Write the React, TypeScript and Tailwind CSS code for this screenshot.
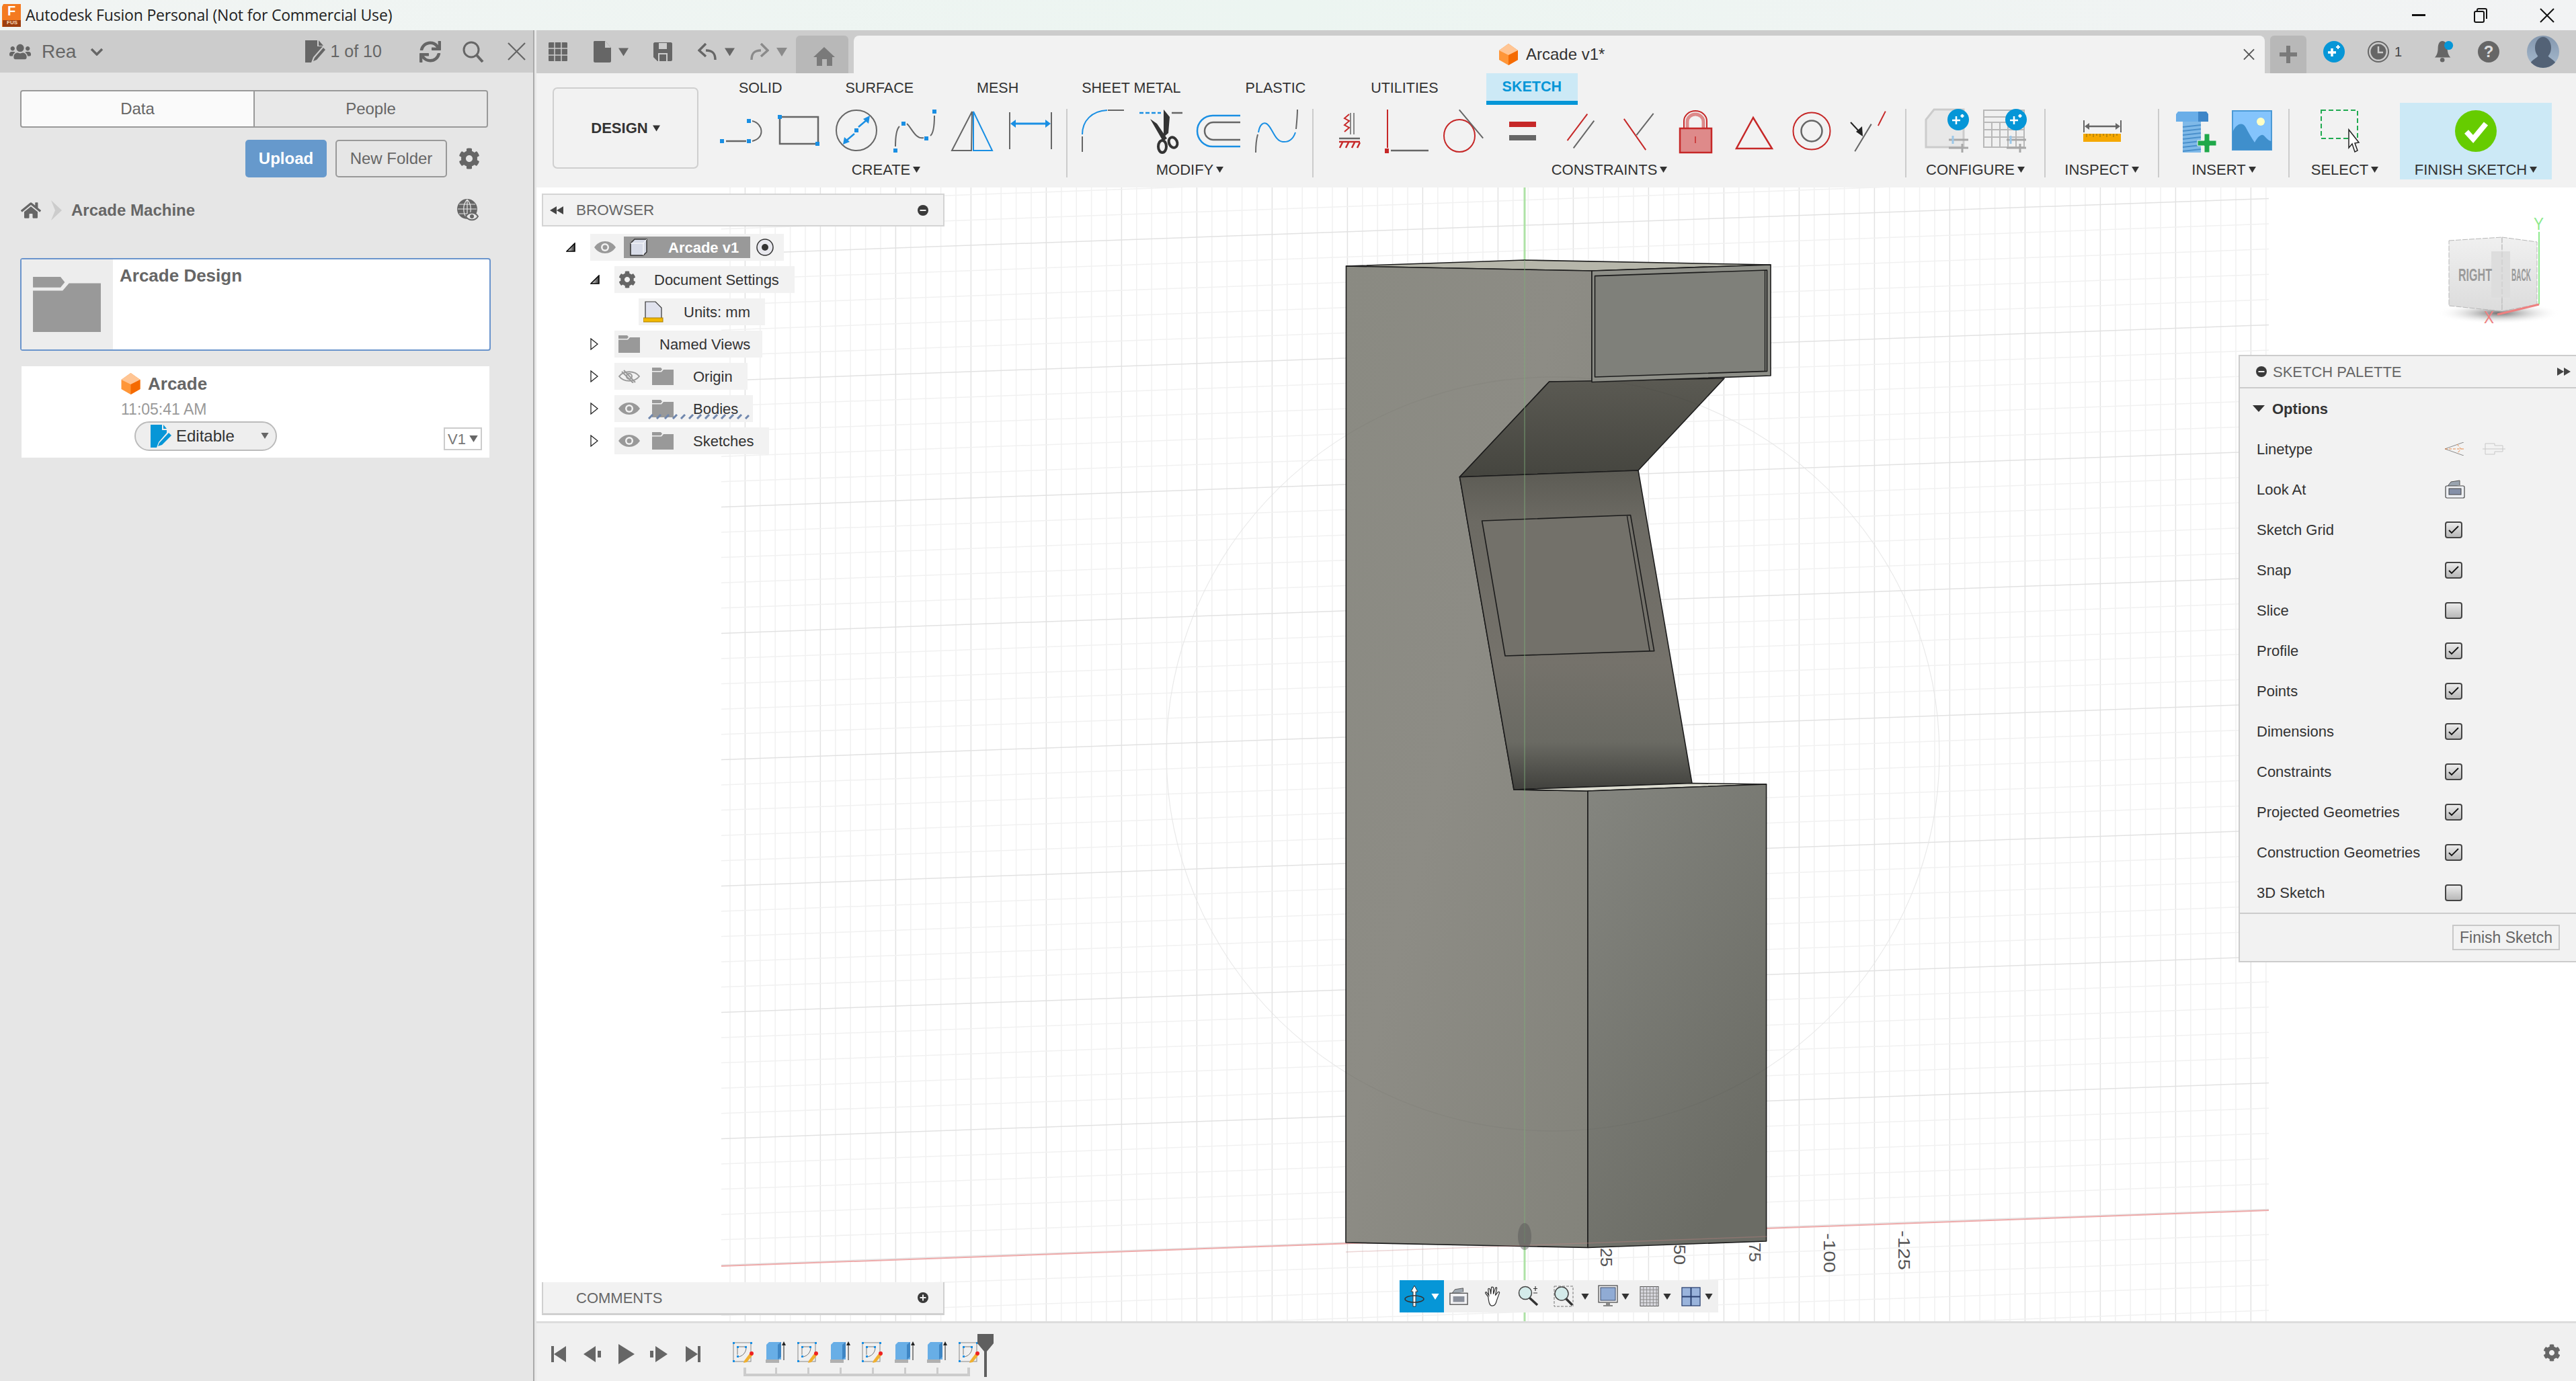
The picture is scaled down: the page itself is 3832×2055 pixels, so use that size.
import type { ReactNode } from "react";
import { FaCog, FaHome, FaSync, FaUsers } from "react-icons/fa";

const B = "#1a8fe3";
const G = "#666666";
const R = "#c62828";

function Cell({ children }: { children: ReactNode }) {
  return (
    <svg viewBox="0 0 86 70" className="w-[86px] h-[70px] shrink-0" fill="none">
      {children}
    </svg>
  );
}

function Sq({ x, y, c = B }: { x: number; y: number; c?: string }) {
  return <rect x={x - 3} y={y - 3} width="6" height="6" fill={c} />;
}

function Caret({ c = "#333333", w = 11, h = 9 }: { c?: string; w?: number; h?: number }) {
  return (
    <svg viewBox="0 0 10 8" style={{ width: w, height: h }} className="shrink-0">
      <path d="M0 0H10L5 8Z" fill={c} />
    </svg>
  );
}

function Cube({ className }: { className: string }) {
  return (
    <svg viewBox="0 0 28 32" className={className}>
      <path d="M14 0L28 10V24L14 32L0 24V10Z" fill="#ff9638" />
      <path d="M14 0L28 10L14 17L0 10Z" fill="#ffc594" />
      <path d="M14 17L28 10V24L14 32Z" fill="#f56a00" />
    </svg>
  );
}

function Folder({ className }: { className: string }) {
  return (
    <svg viewBox="0 0 32 26" className={className}>
      <path d="M0 0H13L15 2.5L13 5H0Z" fill="#999999" />
      <path d="M0 6.5H14L17 3H32V26H0Z" fill="#999999" />
    </svg>
  );
}

function Eye({ off }: { off?: boolean }) {
  if (off) {
    return (
      <svg viewBox="0 0 32 20" className="w-[32px] h-[20px]" fill="none" stroke="#999999" strokeWidth="2">
        <path d="M1 10C8 1 24 1 31 10C24 19 8 19 1 10Z" />
        <circle cx="16" cy="10" r="4" />
        <path d="M8 1L25 19M5 3L22 20" />
      </svg>
    );
  }
  return (
    <svg viewBox="0 0 32 20" className="w-[32px] h-[20px]">
      <path d="M0 10C8 -2 24 -2 32 10C24 22 8 22 0 10Z" fill="#999999" />
      <circle cx="16" cy="10" r="6" fill="#f2f2f2" />
      <circle cx="16" cy="10" r="3.5" fill="#999999" />
    </svg>
  );
}

function Expander({ open }: { open?: boolean }) {
  if (open) {
    return (
      <svg viewBox="0 0 14 14" className="w-[14px] h-[14px]">
        <defs>
          <linearGradient id="exp" x1="0" x2="1" y1="0" y2="0">
            <stop offset="0" stopColor="#ffffff" />
            <stop offset="1" stopColor="#333333" />
          </linearGradient>
        </defs>
        <path d="M1 13L13 1V13Z" fill="url(#exp)" stroke="#000000" strokeWidth="1.5" />
      </svg>
    );
  }
  return (
    <svg viewBox="0 0 12 18" className="w-[12px] h-[18px]">
      <path d="M1 1L11 9L1 17Z" fill="#ffffff" stroke="#222222" strokeWidth="1.3" />
    </svg>
  );
}

function RoundBtn({ minus }: { minus?: boolean }) {
  return (
    <svg viewBox="0 0 16 16" className="w-[16px] h-[16px]">
      <circle cx="8" cy="8" r="8" fill="#3a3a3a" />
      <rect x="3.5" y="7" width="9" height="2" fill="#f2f2f2" />
      {!minus && <rect x="7" y="3.5" width="2" height="9" fill="#f2f2f2" />}
    </svg>
  );
}

function Spark({ className }: { className: string }) {
  return (
    <svg viewBox="0 0 32 32" className={className}>
      <circle cx="16" cy="16" r="16" fill="#0696d7" />
      <path d="M13 11v12M7 17h12" stroke="#ffffff" strokeWidth="3.5" />
      <path d="M22 6v6M19 9h6" stroke="#ffffff" strokeWidth="2" />
    </svg>
  );
}

function Sliders() {
  return (
    <g stroke="#a8a8a8" strokeWidth="3">
      <path d="M46 48H75M46 60H75" />
      <path d="M52 42V54" stroke="#9cc8e8" />
      <path d="M66 54V67" />
    </g>
  );
}

function ToolGroup({ w, label, children, bg }: { w: string; label: string; children?: ReactNode; bg?: string }) {
  return (
    <div className={`${w} ${bg ?? ""} h-full shrink-0 flex flex-col items-center pt-[7px]`}>
      <div className="flex h-[70px]">{children}</div>
      <div className="mt-[7px] flex items-center gap-[4px] h-[30px] text-[22px] text-[#333333] whitespace-nowrap">
        {label}
        <Caret />
      </div>
    </div>
  );
}

function Sep() {
  return <div className="w-[2px] h-[102px] my-[9px] bg-[#cccccc] shrink-0" />;
}

function Create() {
  return (
    <>
      <Cell>
        <path d="M20 50H50" stroke={G} strokeWidth="2.5" />
        <path d="M59 20C76 24 78 46 59 50" stroke={G} strokeWidth="2" />
        <Sq x={14} y={50} /><Sq x={54} y={50} /><Sq x={54} y={20} />
      </Cell>
      <Cell>
        <path d="M17 14H71V54H14V17" stroke={G} strokeWidth="2.5" />
        <Sq x={14} y={14} /><Sq x={70} y={54} />
      </Cell>
      <Cell>
        <circle cx="42" cy="34" r="30" stroke={G} strokeWidth="2" />
        <path d="M45 29L58 18M39 39L26 50" stroke={B} strokeWidth="2.5" />
        <path d="M62 12L60 24L52 17ZM22 55L24 44L32 51Z" fill={B} />
        <rect x="39" y="31" width="6" height="6" fill={B} />
      </Cell>
      <Cell>
        <path d="M14 58C14 42 16 32 20 28M31 24C38 30 44 48 56 45M66 42C71 38 72 25 72 12" stroke={G} strokeWidth="2" />
        <Sq x={14} y={64} /><Sq x={26} y={24} /><Sq x={60} y={46} /><Sq x={72} y={6} />
      </Cell>
      <Cell>
        <path d="M42 6L12 64H41Z" stroke={G} strokeWidth="2" />
        <path d="M44 6V64H72Z" stroke={B} strokeWidth="2" />
      </Cell>
      <Cell>
        <path d="M12 7V62M74 7V62" stroke={G} strokeWidth="2" />
        <path d="M20 24H66" stroke={B} strokeWidth="3" />
        <path d="M13 24L21 18V30ZM73 24L65 18V30Z" fill={B} />
      </Cell>
    </>
  );
}

function Modify() {
  return (
    <>
      <Cell>
        <path d="M12 40C12 20 26 5 49 4" stroke={B} strokeWidth="2" />
        <path d="M50 4H74M12 43V66" stroke={G} strokeWidth="2" />
      </Cell>
      <Cell>
        <path d="M11 8H43" stroke={B} strokeWidth="2.5" strokeDasharray="6 3" />
        <path d="M59 8H75" stroke={G} strokeWidth="2.5" />
        <path d="M47 3L56 14L54 38L47 44ZM27 17L37 24L52 46L46 50Z" fill="#333333" />
        <ellipse cx="45" cy="58" rx="6" ry="9" fill="none" stroke="#333333" strokeWidth="4" />
        <ellipse cx="61" cy="52" rx="6" ry="8" fill="none" stroke="#333333" strokeWidth="4" transform="rotate(-25 61 52)" />
      </Cell>
      <Cell>
        <path d="M75 12H34A23 23 0 0 0 34 58H75" stroke={B} strokeWidth="2.5" />
        <path d="M75 22H35A13 13 0 0 0 35 48H75" stroke={G} strokeWidth="2.5" />
      </Cell>
      <Cell>
        <path d="M16 37C18 24 24 22 28 24C36 28 40 50 52 51C62 52 68 46 71 37" stroke={B} strokeWidth="2" />
        <path d="M72 32C73 22 74 12 74 3M12 67C12 55 13 47 15 40" stroke={G} strokeWidth="2" />
      </Cell>
    </>
  );
}

function Constraints() {
  return (
    <>
      <Cell>
        <path d="M45 8V40M50 8V40" stroke={G} strokeWidth="1.5" />
        <path d="M43 10L36 16L43 20L36 26L43 30L36 36" stroke={R} strokeWidth="2" />
        <path d="M28 46H59" stroke={G} strokeWidth="2.5" />
        <path d="M28 51H59M33 52L29 60M42 52L38 60M51 52L47 60M59 52L55 60" stroke={R} strokeWidth="2.5" />
      </Cell>
      <Cell>
        <path d="M14 3V60" stroke={R} strokeWidth="2" />
        <rect x="10" y="61" width="6" height="7" fill={R} />
        <path d="M19 64H75" stroke={G} strokeWidth="2.5" />
      </Cell>
      <Cell>
        <ellipse cx="35" cy="42" rx="23" ry="24" stroke={R} strokeWidth="2" />
        <path d="M33 5L72 44" stroke={G} strokeWidth="2" transform="rotate(5 52 24)" />
      </Cell>
      <Cell>
        <rect x="23" y="21" width="40" height="8" fill={R} />
        <rect x="23" y="41" width="40" height="8" fill={G} />
      </Cell>
      <Cell>
        <path d="M56 12L21 47" stroke={R} strokeWidth="2" transform="rotate(-8 38 30)" />
        <path d="M66 22L30 58" stroke={G} strokeWidth="2" transform="rotate(-8 48 40)" />
      </Cell>
      <Cell>
        <path d="M18 20L58 60" stroke={R} strokeWidth="2" transform="rotate(10 38 40)" />
        <path d="M67 10L39 40" stroke={G} strokeWidth="2" transform="rotate(-5 53 25)" />
      </Cell>
      <Cell>
        <path d="M25 31V20A17 15 0 0 1 59 20V31" stroke={R} strokeWidth="2" />
        <path d="M30 31V21A12 11 0 0 1 54 21V31" stroke="#dd8a8a" strokeWidth="5" />
        <rect x="19" y="31" width="47" height="36" fill="#de8a8a" stroke={R} strokeWidth="2.5" />
        <path d="M42 43V53" stroke={R} strokeWidth="1.5" />
      </Cell>
      <Cell>
        <path d="M42 15L17 61H70Z" stroke={R} strokeWidth="2.5" />
      </Cell>
      <Cell>
        <circle cx="43" cy="35" r="27.5" stroke={R} strokeWidth="2" />
        <circle cx="43" cy="35" r="15.5" stroke={G} strokeWidth="2.5" />
      </Cell>
      <Cell>
        <path d="M17 62L50 28" stroke={G} strokeWidth="2" transform="rotate(-13 33 45)" />
        <path d="M53 25L70 8" stroke={R} strokeWidth="2" transform="rotate(-18 61 17)" />
        <path d="M15 22L28 36" stroke="#222222" strokeWidth="2" />
        <path d="M33 43L23 36L32 28Z" fill="#222222" />
      </Cell>
    </>
  );
}

function Configure() {
  return (
    <>
      <Cell>
        <path d="M12 59V18L24 3H68V59Z" fill="#e8e8e8" stroke="#cccccc" strokeWidth="3" />
        <Sliders />
        <circle cx="60" cy="18" r="16" fill="#0696d7" />
        <path d="M57 13V25M51 19H63M66 10V15M63.5 12.5H68.5" stroke="#ffffff" strokeWidth="2.5" />
      </Cell>
      <Cell>
        <rect x="12" y="4" width="60" height="55" fill="#f0f0f0" stroke="#b8b8b8" strokeWidth="2" />
        <path d="M12 14H72M24 22V58M36 22V58M48 22V58M60 22V58M12 22H72M12 33H72M12 44H72" stroke="#b8b8b8" strokeWidth="2" />
        <Sliders />
        <circle cx="60" cy="18" r="16" fill="#0696d7" />
        <path d="M57 13V25M51 19H63M66 10V15M63.5 12.5H68.5" stroke="#ffffff" strokeWidth="2.5" />
      </Cell>
    </>
  );
}

function Inspect() {
  return (
    <Cell>
      <path d="M16 19V37M71 19V37" stroke={G} strokeWidth="2" />
      <path d="M22 28H65" stroke={G} strokeWidth="2.5" />
      <path d="M17 28L24 23V33ZM70 28L63 23V33Z" fill={G} />
      <rect x="15" y="39" width="56" height="12" fill="#f5a800" />
      <path d="M20 39V44M25 39V42M30 39V44M35 39V42M40 39V44M45 39V42M50 39V44M55 39V42M60 39V44M65 39V42" stroke="#8a6a10" strokeWidth="1" />
    </Cell>
  );
}

function Insert() {
  return (
    <>
      <Cell>
        <path d="M18 6H60L63 10V21H15V10Z" fill="#6aaee8" />
        <path d="M48 6H60L63 10V21H48Z" fill="#3f86c8" />
        <rect x="25" y="21" width="27" height="46" fill="#7fb9e8" />
        <path d="M25 29L52 26M25 35L52 32M25 41L52 38M25 47L52 44M25 53L52 50M25 59L52 56M25 65L52 62" stroke="#4a90cc" strokeWidth="2" />
        <path d="M57 39H65V49H75V57H65V67H57V57H47V49H57Z" fill="#1fa84a" stroke="#f2f2f2" strokeWidth="1" />
      </Cell>
      <Cell>
        <rect x="13" y="5" width="58" height="58" fill="#84c4fc" stroke="#4b9ad6" strokeWidth="2" />
        <path d="M13 63V37C18 24 28 20 33 30C37 38 42 46 46 52C50 44 56 38 60 42C64 46 67 50 71 50V63Z" fill="#3f8fcc" />
        <circle cx="55" cy="21" r="6" fill="#ffffc4" />
      </Cell>
    </>
  );
}

function SelectIcon() {
  return (
    <div className="mr-[16px]">
      <Cell>
        <rect x="16" y="4" width="54" height="42" stroke="#1faa50" strokeWidth="2" strokeDasharray="7 4" />
        <path d="M57 33V60L62 54L66 66L70 64L66 53L72 52Z" fill="#ffffff" stroke="#222222" strokeWidth="1.5" />
      </Cell>
    </div>
  );
}

function Grid() {
  const vertical = Array.from({ length: 104 }, (_, i) => 1086 + i * 22.4);
  const horizontal = Array.from({ length: 60 }, (_, i) => 1800 + 225 - i * 37.6);
  return (
    <>
      {vertical.map((x, i) => (
        <path key={x} d={`M${x} 279V1966`} stroke={(i + 4) % 5 === 0 ? "#e2e2e2" : "#f1f1f1"} strokeWidth="1.5" />
      ))}
      {horizontal.map((y, i) => (
        <path key={y} d={`M1073 ${y + 83}L3375 ${y}`} stroke={i % 5 === 1 ? "#e2e2e2" : "#f1f1f1"} strokeWidth="1.5" />
      ))}
      <rect x="3376" y="279" width="456" height="1687" fill="#ffffff" />
      <ellipse cx="2310" cy="1122" rx="575" ry="561" fill="none" stroke="#f0f0f0" strokeWidth="1" />
      <path d="M1073 1884L3375 1801" stroke="#eeaaaa" strokeWidth="2" />
      <path d="M2268 279V1966" stroke="#aee2a6" strokeWidth="3" />
    </>
  );
}

function Model() {
  const edge = { stroke: "#1c1c1c", strokeWidth: 1.6, strokeLinejoin: "round" as const };
  return (
    <g>
      <defs>
        <linearGradient id="left" x1="0" x2="1" y1="0" y2="1">
          <stop offset="0" stopColor="#8a8a82" />
          <stop offset="0.45" stopColor="#8d8c85" />
          <stop offset="1" stopColor="#83837b" />
        </linearGradient>
        <linearGradient id="right" x1="0" x2="0.6" y1="0" y2="1">
          <stop offset="0" stopColor="#84857f" />
          <stop offset="1" stopColor="#6b6c65" />
        </linearGradient>
        <linearGradient id="under" x1="0" x2="0" y1="0" y2="1">
          <stop offset="0" stopColor="#5b5a53" />
          <stop offset="1" stopColor="#45453f" />
        </linearGradient>
        <linearGradient id="slope" x1="0" x2="0" y1="0" y2="1">
          <stop offset="0" stopColor="#5c5b54" />
          <stop offset="0.16" stopColor="#6c6a63" />
          <stop offset="0.6" stopColor="#75726b" />
          <stop offset="0.85" stopColor="#6a6a63" />
          <stop offset="1" stopColor="#41413d" />
        </linearGradient>
      </defs>
      <path d="M2002.5 396L2267 387L2634 394L2368 403Z" fill="#b6b6aa" {...edge} />
      <path d="M2002.5 396L2368 403V568.5L2304.6 568L2171.4 709.7L2252 1175L2362 1177V1856.5L2002 1849Z" fill="url(#left)" {...edge} />
      <path d="M2304.6 568L2565 563L2437 700L2171.4 709.7Z" fill="url(#under)" {...edge} />
      <path d="M2171.4 709.7L2437 700L2517 1165.5L2252 1175Z" fill="url(#slope)" {...edge} />
      <path d="M2204.6 775L2425.5 766.5L2460.7 968.6L2239 976Z" fill="#73716a" {...edge} />
      <path d="M2420.4 767.7L2454 968.6" fill="none" stroke="#1c1c1c" strokeWidth="1.4" />
      <path d="M2368 403L2634 394V559L2368 568.5Z" fill="#8e8f88" {...edge} />
      <path d="M2372.5 410.6L2628.6 402V552.4L2372.5 561Z" fill="#7f807a" {...edge} />
      <path d="M2625.5 403V552.5" stroke="#1c1c1c" strokeWidth="1.3" />
      <path d="M2252 1175L2517 1165.5L2627.6 1167L2362 1177Z" fill="#dcdcd0" {...edge} />
      <path d="M2362 1177L2627.6 1167V1847L2362 1856.5Z" fill="url(#right)" {...edge} />
      <ellipse cx="2310" cy="1122" rx="575" ry="561" fill="none" stroke="#000000" strokeOpacity="0.03" strokeWidth="1.5" />
      <path d="M2268 387V1850" stroke="#7fae7a" strokeOpacity="0.55" strokeWidth="1.5" />
      <path d="M2002 1863L2628 1840" stroke="#c98888" strokeOpacity="0.35" strokeWidth="1.5" />
      <ellipse cx="2268" cy="1840" rx="10" ry="20" fill="#555555" fillOpacity="0.45" />
    </g>
  );
}

function Ruler() {
  const labels: [string, number, number, number][] = [
    ["25", 2381, 1857, 28],
    ["50", 2490, 1852, 30],
    ["75", 2602, 1849, 29],
    ["-100", 2713, 1835, 59],
    ["-125", 2824, 1831, 59],
  ];
  return (
    <g>
      {labels.map(([t, x, y, len]) => (
        <text key={t} x={x} y={y} transform={`rotate(90 ${x} ${y})`} fontSize="23" fill="#555555" fontFamily="Liberation Sans" textLength={len} lengthAdjust="spacingAndGlyphs">
          {t}
        </text>
      ))}
    </g>
  );
}

function ViewCube() {
  return (
    <g>
      <defs>
        <linearGradient id="cube" x1="0" x2="0" y1="0" y2="1">
          <stop offset="0" stopColor="#f0f0f0" />
          <stop offset="1" stopColor="#dcdcdc" />
        </linearGradient>
        <radialGradient id="cubeShadow">
          <stop offset="0" stopColor="#707070" />
          <stop offset="1" stopColor="#ffffff" stopOpacity="0" />
        </radialGradient>
      </defs>
      <ellipse cx="3717" cy="466" rx="92" ry="16" fill="url(#cubeShadow)" />
      <path d="M3643 358L3722 353V463L3643 455Z" fill="url(#cube)" stroke="#b8b8b8" strokeWidth="1" strokeDasharray="8 2" />
      <path d="M3722 353L3774 360V453L3722 463Z" fill="url(#cube)" stroke="#b8b8b8" strokeWidth="1" strokeDasharray="8 2" />
      <rect x="3706" y="374" width="28" height="69" fill="#dddddd" />
      <path d="M3722 353V463" stroke="#c8c8c8" strokeWidth="1" strokeDasharray="8 3" />
      <text x="3657" y="418" fontSize="25" fontWeight="700" fill="#9a9a9a" fontFamily="Liberation Sans" textLength="50" lengthAdjust="spacingAndGlyphs">RIGHT</text>
      <text x="3736" y="418" fontSize="25" fontWeight="700" fill="#9a9a9a" fontFamily="Liberation Sans" textLength="29" lengthAdjust="spacingAndGlyphs">BACK</text>
      <path d="M3777 345V453" stroke="#8eea8e" strokeWidth="2" />
      <path d="M3777 453L3715 468" stroke="#ee8080" strokeWidth="3" />
      <text x="3769" y="342" fontSize="25" fill="#8eea8e" fontFamily="Liberation Sans" textLength="15" lengthAdjust="spacingAndGlyphs">Y</text>
      <text x="3695" y="481" fontSize="25" fill="#ee8080" fontFamily="Liberation Sans" textLength="15" lengthAdjust="spacingAndGlyphs">X</text>
    </g>
  );
}

function TreeRow({ level, open, noArrow, w, bg = "bg-[#f2f2f2]", children }: { level: number; open?: boolean; noArrow?: boolean; w: string; bg?: string; children: ReactNode }) {
  const ml = level === 0 ? "ml-[36px]" : level === 1 ? "ml-[72px]" : "ml-[108px]";
  return (
    <div className={`flex items-center h-[40px] ${ml}`}>
      <div className="w-[36px] flex items-center justify-start">{!noArrow && <Expander open={open} />}</div>
      <div className={`${w} ${bg} h-full flex items-center`}>{children}</div>
    </div>
  );
}

function BrowserPanel() {
  return (
    <div className="absolute left-[8px] top-[9px] w-[599px] text-[22px] text-[#333333]">
      <div className="h-[49px] bg-[#f2f2f2] border-2 border-[#d4d4d4] flex items-center pl-[10px] pr-[22px]">
        <svg viewBox="0 0 20 12" className="w-[20px] h-[12px] mr-[21px]">
          <path d="M0 6L10 0V12ZM10 6L20 0V12Z" fill="#444444" />
        </svg>
        <span className="flex-1 text-[#666666] text-[22.5px] ml-[-2px]">BROWSER</span>
        <RoundBtn minus />
      </div>
      <div className="mt-[11px] flex flex-col gap-[8px]">
        <TreeRow level={0} open w="w-[288px]">
          <div className="w-[6px]" />
          <Eye />
          <div className="ml-[12px] w-[188px] h-[32px] bg-[#999999] flex items-center text-white font-bold">
            <svg viewBox="0 0 26 26" className="w-[26px] h-[26px] ml-[9px] mr-[31px]">
              <path d="M1 7L7 1H25V20L20 25H1Z" fill="#d8dce8" stroke="#333333" strokeWidth="1.5" />
              <path d="M1 7H20V25M20 7L25 1" fill="none" stroke="#ffffff" strokeWidth="1" />
            </svg>
            Arcade v1
          </div>
          <svg viewBox="0 0 26 26" className="w-[26px] h-[26px] ml-[9px]">
            <circle cx="13" cy="13" r="12" fill="#e8e8ee" stroke="#333333" strokeWidth="1.5" />
            <circle cx="13" cy="13" r="5" fill="#333333" />
          </svg>
        </TreeRow>
        <TreeRow level={1} open w="w-[268px]">
          <FaCog className="ml-[6px] w-[26px] h-[26px] text-[#666666]" />
          <span className="ml-[27px]">Document Settings</span>
        </TreeRow>
        <TreeRow level={2} noArrow w="w-[188px]">
          <svg viewBox="0 0 30 32" className="w-[30px] h-[32px] ml-[7px]">
            <path d="M3 1H18L27 10V26H3Z" fill="#e0e2ee" stroke="#333333" strokeWidth="1.2" />
            <rect x="0" y="25" width="29" height="6" fill="#f2b800" stroke="#a87c00" strokeWidth="1" />
          </svg>
          <span className="ml-[30px]">Units: mm</span>
        </TreeRow>
        <TreeRow level={1} w="w-[220px]">
          <Folder className="ml-[6px] w-[32px] h-[26px]" />
          <span className="ml-[29px]">Named Views</span>
        </TreeRow>
        <TreeRow level={1} w="w-[198px]">
          <div className="ml-[6px]"><Eye off /></div>
          <Folder className="ml-[18px] w-[32px] h-[26px]" />
          <span className="ml-[29px]">Origin</span>
        </TreeRow>
        <TreeRow level={1} w="w-[206px] relative">
          <div className="ml-[6px]"><Eye /></div>
          <Folder className="ml-[18px] w-[32px] h-[26px]" />
          <span className="ml-[29px]">Bodies</span>
          <svg viewBox="0 0 152 8" className="absolute left-[49px] top-[28px] w-[152px] h-[8px]">
            <path d="M2 7L8 1M14 7L20 1M26 7L32 1M38 7L44 1M50 7L56 1M62 7L68 1M74 7L80 1M86 7L92 1M98 7L104 1M110 7L116 1M122 7L128 1M134 7L140 1M146 7L151 2" stroke="#6f86ad" strokeWidth="3" />
          </svg>
        </TreeRow>
        <TreeRow level={1} w="w-[230px]">
          <div className="ml-[6px]"><Eye /></div>
          <Folder className="ml-[18px] w-[32px] h-[26px]" />
          <span className="ml-[29px]">Sketches</span>
        </TreeRow>
      </div>
    </div>
  );
}

function Check({ on }: { on: boolean }) {
  return (
    <div className="w-[26px] h-[25px] rounded-[4px] border-2 border-[#444444] bg-linear-to-b from-[#ececec] to-[#b8b8b8] flex items-center justify-center">
      {on && (
        <svg viewBox="0 0 20 16" className="w-[20px] h-[16px]" fill="none">
          <path d="M3 9L7 13L17 3" stroke="#111111" strokeWidth="1.8" />
        </svg>
      )}
    </div>
  );
}

const paletteRows: [string, boolean][] = [
  ["Sketch Grid", true],
  ["Snap", true],
  ["Slice", false],
  ["Profile", true],
  ["Points", true],
  ["Dimensions", true],
  ["Constraints", true],
  ["Projected Geometries", true],
  ["Construction Geometries", true],
  ["3D Sketch", false],
];

function PaletteRow({ label, children }: { label: string; children: ReactNode }) {
  return (
    <div className="h-[60px] flex items-center pl-[25px] text-[#333333] text-[22px]">
      <span className="w-[280px]">{label}</span>
      {children}
    </div>
  );
}

function SketchPalette() {
  return (
    <div className="absolute right-0 top-[249px] w-[502px] h-[904px] bg-[#f2f2f2] border-2 border-r-0 border-[#cccccc] flex flex-col">
      <div className="h-[48px] shrink-0 border-b-2 border-[#cccccc] flex items-center pl-[24px] pr-[8px] text-[22px] text-[#666666]">
        <RoundBtn minus />
        <span className="ml-[9px] flex-1">SKETCH PALETTE</span>
        <svg viewBox="0 0 20 12" className="w-[20px] h-[12px]">
          <path d="M0 0L10 6L0 12ZM10 0L20 6L10 12Z" fill="#444444" />
        </svg>
      </div>
      <div className="h-[60px] shrink-0 flex items-center pl-[19px] text-[22px] font-bold text-[#333333]">
        <svg viewBox="0 0 18 10" className="w-[18px] h-[10px] mr-[11px]">
          <path d="M0 0H18L9 10Z" fill="#333333" />
        </svg>
        Options
      </div>
      <PaletteRow label="Linetype">
        <svg viewBox="0 0 92 20" className="w-[92px] h-[20px] shrink-0" fill="none">
          <path d="M28 0L0 10L28 20" stroke="#8a8a8a" strokeWidth="1" />
          <path d="M0 10H30M18 3L24 10L18 17" stroke="#e88a4a" strokeWidth="1" strokeDasharray="4 2" />
          <path d="M60 2H74V5H86V14H74V18H60ZM56 10H90" stroke="#c8c8c8" strokeWidth="1" />
        </svg>
      </PaletteRow>
      <PaletteRow label="Look At">
        <svg viewBox="0 0 30 28" className="w-[30px] h-[28px] shrink-0">
          <path d="M2 12L9 3L22 1V8" fill="#9aa4b0" stroke="#555555" strokeWidth="1" />
          <rect x="1" y="9" width="28" height="18" rx="2" fill="#eef0f4" stroke="#444444" strokeWidth="1.2" />
          <rect x="6" y="13" width="18" height="9" fill="#8590a8" stroke="#444444" strokeWidth="1" />
        </svg>
      </PaletteRow>
      {paletteRows.map(([label, on]) => (
        <PaletteRow key={label} label={label}>
          <Check on={on} />
        </PaletteRow>
      ))}
      <div className="flex-1 border-t-2 border-[#cccccc] flex items-start justify-end pt-[16px] pr-[24px]">
        <div className="w-[160px] h-[38px] border-2 border-[#c8c8c8] text-[#666666] text-[23px] flex items-center justify-center">Finish Sketch</div>
      </div>
    </div>
  );
}

function NavBar() {
  return (
    <div className="absolute left-[1284px] top-[1626px] h-[48px] w-[474px] bg-[#f0f0f0] flex items-center">
      <div className="w-[66px] h-full bg-[#0696d7] flex items-center justify-center gap-[10px]">
        <svg viewBox="0 0 30 34" className="w-[30px] h-[34px]" fill="none">
          <path d="M15 1L20 10H17V32H13V10H10Z" fill="#ffffff" stroke="#333333" strokeWidth="1" />
          <ellipse cx="15" cy="21" rx="14" ry="5" stroke="#333333" strokeWidth="1.5" />
        </svg>
        <Caret c="#ffffff" w={12} h={9} />
      </div>
      <svg viewBox="0 0 30 30" className="w-[28px] h-[28px] ml-[8px]">
        <path d="M2 13L9 4L22 2V8" fill="#a0a8b0" stroke="#555555" strokeWidth="1" />
        <rect x="1" y="10" width="28" height="18" fill="#f2f2f4" stroke="#555555" strokeWidth="1.5" />
        <rect x="6" y="15" width="18" height="9" fill="#8a8f9a" />
      </svg>
      <svg viewBox="0 0 32 32" className="w-[31px] h-[31px] ml-[23px]">
        <path d="M7 16L3 11C2 9 4 8 5 10L8 14L7 5C7 3 9 3 10 5L11 12L12 2C12 1 14 1 15 2L15 12L18 3C19 1 21 2 20 4L18 14L22 9C24 8 25 9 24 11L20 22C19 27 17 30 13 30C9 30 8 25 7 16Z" fill="#ffffff" stroke="#333333" strokeWidth="1.3" />
      </svg>
      <svg viewBox="0 0 32 32" className="w-[32px] h-[32px] ml-[20px]">
        <path d="M17 18L29 29" stroke="#333333" strokeWidth="3.5" />
        <circle cx="11" cy="11" r="9.5" fill="#d4ebea" stroke="#444444" strokeWidth="1.5" />
        <path d="M26 1V8M23 4.5H29M23 11H29" stroke="#333333" strokeWidth="1.2" />
      </svg>
      <svg viewBox="0 0 30 32" className="w-[30px] h-[32px] ml-[21px]">
        <rect x="1" y="1" width="28" height="30" fill="none" stroke="#777777" strokeWidth="1" strokeDasharray="4 2" />
        <path d="M17 18L28 29" stroke="#333333" strokeWidth="3.5" />
        <circle cx="12" cy="12" r="10" fill="#d4ebea" stroke="#444444" strokeWidth="1.5" />
      </svg>
      <div className="ml-[11px]"><Caret c="#333333" w={12} h={9} /></div>
      <svg viewBox="0 0 30 34" className="w-[30px] h-[34px] ml-[13px]">
        <rect x="1" y="1" width="28" height="25" fill="#f0f0f0" stroke="#444444" strokeWidth="1.2" />
        <rect x="4" y="4" width="22" height="19" fill="#90abd4" stroke="#3a4a6a" strokeWidth="1" />
        <path d="M12 27H18V30H22V32H8V30H12Z" fill="#888888" />
      </svg>
      <div className="ml-[5px]"><Caret c="#333333" w={12} h={9} /></div>
      <svg viewBox="0 0 30 32" className="w-[29px] h-[32px] ml-[15px]">
        <rect x="1" y="1" width="28" height="30" fill="#d8d8de" stroke="#555555" strokeWidth="1" />
        <path d="M1 6H29M1 11H29M1 16H29M1 21H29M1 26H29M6 1V31M11 1V31M16 1V31M21 1V31M26 1V31" stroke="#8a8a8a" strokeWidth="1" />
      </svg>
      <div className="ml-[6px]"><Caret c="#333333" w={12} h={9} /></div>
      <svg viewBox="0 0 30 30" className="w-[29px] h-[29px] ml-[15px]">
        <rect x="1" y="1" width="28" height="28" fill="#9ab4dc" stroke="#2a4070" strokeWidth="1.3" />
        <path d="M15 1V29M1 15H29" stroke="#2a4070" strokeWidth="2" />
      </svg>
      <div className="ml-[6px]"><Caret c="#333333" w={12} h={9} /></div>
    </div>
  );
}

function SketchStep() {
  return (
    <svg viewBox="0 0 31 31" className="w-[31px] h-[31px] shrink-0" fill="none">
      <rect x="1" y="1" width="26" height="28" stroke="#888888" strokeWidth="1" />
      <path d="M7 7H20M7 7V19M7 22C14 22 20 16 20 8" stroke="#777777" strokeWidth="1" />
      <g fill={B}>
        <rect width="3" height="3" /><rect x="26" width="3" height="3" /><rect y="27" width="3" height="3" />
        <rect x="6" y="6" width="3" height="3" /><rect x="18" y="6" width="3" height="3" /><rect x="6" y="20" width="3" height="3" />
      </g>
      <path d="M17 28L26 16L30 19L21 30L16 31Z" fill="#f0b030" />
      <circle cx="28" cy="17" r="3" fill="#ee2222" />
    </svg>
  );
}

function ExtrudeStep() {
  return (
    <svg viewBox="0 0 31 32" className="w-[31px] h-[32px] shrink-0">
      <path d="M2 5L6 1H24V27H2Z" fill="#68aee6" />
      <path d="M19 5L24 1V23L19 27Z" fill="#3f86c4" />
      <rect x="1" y="27" width="20" height="5" fill="#b0b0b0" />
      <path d="M28 28V4" stroke="#222222" strokeWidth="1" />
      <path d="M28 0L31 6H25Z" fill="#222222" />
    </svg>
  );
}

function Timeline() {
  const steps = ["s", "e", "s", "e", "s", "e", "e", "s"];
  return (
    <div className="relative h-[89px] shrink-0 bg-[#f0f0f0] border-t-[3px] border-[#dddddd] flex items-center">
      <div className="flex items-center ml-[22px] mt-[6px]">
        <svg viewBox="0 0 22 24" className="w-[22px] h-[24px]"><path d="M0 0H4V24H0ZM22 0V24L4 12Z" fill={G} /></svg>
        <svg viewBox="0 0 26 24" className="w-[26px] h-[24px] ml-[26px]"><path d="M18 0V24L0 12ZM21 7H26V17H21Z" fill={G} /></svg>
        <svg viewBox="0 0 24 30" className="w-[24px] h-[30px] ml-[26px]"><path d="M0 0L24 15L0 30Z" fill={G} /></svg>
        <svg viewBox="0 0 26 24" className="w-[26px] h-[24px] ml-[23px]"><path d="M8 0L26 12L8 24ZM0 7H5V17H0Z" fill={G} /></svg>
        <svg viewBox="0 0 22 24" className="w-[22px] h-[24px] ml-[27px]"><path d="M0 0L18 12L0 24ZM18 0H22V24H18Z" fill={G} /></svg>
      </div>
      <div className="flex items-center ml-[48px] gap-[17px]">
        {steps.map((s, i) => (s === "s" ? <SketchStep key={i} /> : <ExtrudeStep key={i} />))}
      </div>
      <div className="absolute left-[308px] top-[66px] w-[337px] h-[13px] border-x-[4px] border-b-[4px] border-[#cccccc] flex justify-between px-[43px]">
        {[0, 1, 2, 3, 4, 5].map((i) => (
          <div key={i} className="w-[3px] h-full bg-[#cccccc]" />
        ))}
      </div>
      <svg viewBox="0 0 24 64" className="absolute left-[656px] top-[16px] w-[24px] h-[64px]">
        <path d="M0 0H24V14L14 26V64H10V26L0 14Z" fill="#5f5f5f" />
      </svg>
      <FaCog className="absolute right-[23px] top-[31px] w-[26px] h-[26px] text-[#666666]" />
    </div>
  );
}

export default function App() {
  return (
    <div className="w-[3832px] h-[2055px] overflow-hidden flex flex-col bg-white text-[#333333] [font-family:'Liberation_Sans',Arial,sans-serif]">
      {/* Title bar */}
      <header className="h-[45px] shrink-0 flex items-center bg-linear-to-r from-[#f1f4f3] via-[#ecf5f1] to-[#f2f3f4] relative">
        <svg viewBox="0 0 30 34" className="w-[30px] h-[34px] ml-[1px]">
          <path d="M4 0H30V34H2V4Z" fill="#f47a20" />
          <rect x="3" y="24" width="27" height="10" fill="#9c3e10" />
        </svg>
        <span className="absolute left-[11px] top-[4px] text-white text-[20px] leading-[24px] font-bold">F</span>
        <span className="absolute left-[10px] top-[29px] text-[#f8d8b8] text-[8px] leading-[9px] font-bold">FUS</span>
        <span className="ml-[7px] text-[23px] text-[#222222] [font-family:'Open_Sans',sans-serif] tracking-[-0.18px]">
          Autodesk Fusion Personal (Not for Commercial Use)
        </span>
        <div className="ml-auto flex items-center">
          <div className="w-[20px] h-[3px] bg-[#111111] mr-[72px]" />
          <svg viewBox="0 0 20 22" className="w-[20px] h-[22px] mr-[78px]" fill="none" stroke="#111111" strokeWidth="2">
            <rect x="1" y="5" width="14" height="16" rx="2" />
            <path d="M5 4V3C5 2 6 1 7 1H17C18 1 19 2 19 3V16" />
          </svg>
          <svg viewBox="0 0 22 22" className="w-[22px] h-[22px] mr-[32px]" fill="none" stroke="#111111" strokeWidth="2">
            <path d="M1 1L21 21M21 1L1 21" />
          </svg>
        </div>
      </header>

      <div className="flex-1 flex min-h-0">
        {/* Data panel */}
        <aside className="w-[795px] shrink-0 border-r-2 border-[#aaaaaa] bg-[#e6e6e6] flex flex-col">
          <div className="h-[63px] shrink-0 bg-[#cccccc] flex items-center pl-[14px] text-[#666666]">
            <FaUsers className="w-[32px] h-[32px]" />
            <span className="ml-[16px] text-[28px]">Rea</span>
            <svg viewBox="0 0 20 12" className="w-[20px] h-[12px] ml-[21px]" fill="none" stroke="#666666" strokeWidth="3.5">
              <path d="M2 2L10 10L18 2" />
            </svg>
            <svg viewBox="0 0 30 34" className="w-[30px] h-[34px] ml-[300px]">
              <path d="M0 0H18V9H26L12 25L9 33H0Z" fill="#666666" />
              <path d="M20 0L27 8H20Z" fill="#666666" />
              <path d="M14 26L27 11L30 14L17 29L12 31Z" fill="#666666" />
            </svg>
            <span className="ml-[7px] text-[25px]">1 of 10</span>
            <FaSync className="w-[32px] h-[32px] ml-[56px]" />
            <svg viewBox="0 0 32 32" className="w-[32px] h-[32px] ml-[32px]" fill="none" stroke="#666666">
              <circle cx="13" cy="13" r="11" strokeWidth="3" />
              <path d="M21 21L30 31" strokeWidth="4" />
            </svg>
            <svg viewBox="0 0 27 27" className="w-[27px] h-[27px] ml-[35px]" fill="none" stroke="#666666" strokeWidth="2.2">
              <path d="M1 1L26 26M26 1L1 26" />
            </svg>
          </div>

          <div className="mt-[26px] ml-[30px] w-[696px] h-[56px] flex border-2 border-[#999999] rounded-[4px] text-[24px] text-[#666666]">
            <div className="flex-1 bg-[#fafafa] rounded-l-[3px] border-r-2 border-[#999999] flex items-center justify-center">Data</div>
            <div className="flex-1 bg-[#e8e8e8] rounded-r-[3px] flex items-center justify-center">People</div>
          </div>

          <div className="mt-[18px] flex items-center pl-[365px]">
            <div className="w-[121px] h-[56px] bg-[#6699cc] rounded-[5px] text-white font-bold text-[24px] flex items-center justify-center">Upload</div>
            <div className="ml-[13px] w-[166px] h-[56px] border-2 border-[#999999] rounded-[5px] text-[#666666] text-[24px] flex items-center justify-center">New Folder</div>
            <FaCog className="ml-[17px] w-[32px] h-[32px] text-[#666666]" />
          </div>

          <div className="mt-[33px] h-[32px] flex items-center pl-[31px] text-[#666666]">
            <FaHome className="w-[30px] h-[28px]" />
            <svg viewBox="0 0 18 32" className="w-[18px] h-[32px] ml-[14px]">
              <path d="M1 1L17 16L1 31L7 16Z" fill="#cccccc" />
            </svg>
            <span className="ml-[13px] text-[24px] font-bold flex-1">Arcade Machine</span>
            <svg viewBox="0 0 32 34" className="w-[32px] h-[34px] mr-[81px]" fill="none" stroke="#666666" strokeWidth="2">
              <circle cx="15" cy="15" r="14" fill="#666666" />
              <path d="M1 15H29M3 8H27M3 22H27M15 1V29M15 1C8 8 8 22 15 29M15 1C22 8 22 22 15 29" stroke="#e6e6e6" strokeWidth="1.2" />
              <path d="M13 26C17 19 27 19 31 26C27 33 17 33 13 26Z" fill="#e6e6e6" stroke="#666666" strokeWidth="2" />
              <circle cx="22" cy="26" r="3" fill="#666666" stroke="none" />
            </svg>
          </div>

          <div className="mt-[55px] ml-[30px] w-[700px] h-[138px] flex bg-white border-2 border-[#6a94cc] rounded-[4px]">
            <div className="w-[136px] bg-[#ededed] flex items-center justify-center">
              <Folder className="w-[111px] h-[82px] ml-[-2px]" />
            </div>
            <div className="ml-[10px] mt-[5px] text-[26px] font-bold text-[#666666]">Arcade Design</div>
          </div>

          <div className="relative mt-[23px] ml-[32px] w-[696px] h-[136px] bg-white flex">
            <div className="w-[136px]" />
            <div className="ml-[12px] flex flex-col">
              <div className="flex items-center h-[32px] mt-[10px]">
                <Cube className="w-[29px] h-[32px]" />
                <span className="ml-[11px] text-[26px] font-bold text-[#666666]">Arcade</span>
              </div>
              <div className="mt-[5px] text-[23px] text-[#999999]">11:05:41 AM</div>
              <div className="mt-0 ml-[20px] w-[212px] h-[44px] rounded-full border-2 border-[#bbbbbb] bg-[#eeeeee] flex items-center pl-[22px] text-[24px] text-[#333333]">
                <svg viewBox="0 0 32 34" className="w-[32px] h-[34px]">
                  <path d="M0 0H17V8H24V12L12 26L9 34H0Z" fill="#0696d7" />
                  <path d="M19 0L24 6H19Z" fill="#0696d7" />
                  <path d="M13 27L27 12L31 16L17 30L11 32Z" fill="#0696d7" />
                </svg>
                <span className="ml-[6px] flex-1">Editable</span>
                <Caret c="#666666" w={14} h={9} />
                <div className="w-[9px]" />
              </div>
            </div>
            <div className="absolute right-[11px] bottom-[11px] w-[57px] h-[34px] border-2 border-[#cccccc] flex items-center justify-center gap-[5px] text-[22px] text-[#777777]">
              V1
              <Caret c="#666666" w={13} h={10} />
            </div>
          </div>
        </aside>
        <div className="w-[3px] shrink-0 bg-[#e8e8e8]" />

        <main className="flex-1 flex flex-col min-w-0">
          {/* Document tabs */}
          <div className="h-[64px] shrink-0 bg-[#cccccc] flex items-end">
            <div className="h-[56px] flex items-center self-end pb-[8px]">
              <svg viewBox="0 0 28 28" className="w-[28px] h-[28px] ml-[18px]">
                <path d="M0 1C0 0 1 0 2 0H26C27 0 28 0 28 1V27C28 28 27 28 26 28H2C1 28 0 28 0 27Z" fill="#666666" />
                <path d="M9 0V28M19 0V28M0 9H28M0 19H28" stroke="#cccccc" strokeWidth="1.5" />
              </svg>
              <svg viewBox="0 0 26 32" className="w-[26px] h-[32px] ml-[39px]">
                <path d="M1 0H17L26 10V30C26 31 25 32 24 32H2C1 32 0 31 0 30V1Z" fill="#666666" />
                <path d="M17 0L26 10H17Z" fill="#cccccc" />
              </svg>
              <div className="ml-[11px]"><Caret c="#666666" w={15} h={13} /></div>
              <svg viewBox="0 0 28 28" className="w-[28px] h-[28px] ml-[37px]">
                <path d="M2 0H26C27 0 28 1 28 2V26C28 27 27 28 26 28H6L0 22V2C0 1 1 0 2 0Z" fill="#666666" />
                <path d="M8 1H20V10H8Z" fill="#cccccc" />
                <path d="M8 28V17H20V28" fill="#666666" stroke="#cccccc" strokeWidth="2" />
              </svg>
              <svg viewBox="0 0 28 26" className="w-[28px] h-[26px] ml-[38px]" fill="none">
                <path d="M26 25C26 15 22 11 12 11" stroke="#666666" strokeWidth="3.5" />
                <path d="M12 1L2 11L12 20" stroke="#666666" strokeWidth="3.5" />
              </svg>
              <div className="ml-[12px]"><Caret c="#666666" w={15} h={13} /></div>
              <svg viewBox="0 0 28 26" className="w-[28px] h-[26px] ml-[23px]" fill="none">
                <path d="M2 25C2 15 6 11 16 11" stroke="#8a8a8a" strokeWidth="3.5" />
                <path d="M16 1L26 11L16 20" stroke="#8a8a8a" strokeWidth="3.5" />
              </svg>
              <div className="ml-[11px]"><Caret c="#8a8a8a" w={16} h={13} /></div>
            </div>
            <div className="ml-[13px] w-[78px] h-[56px] bg-[#b8b8b8] rounded-t-[6px] flex items-end justify-center pb-[11px]">
              <svg viewBox="0 0 32 28" className="w-[32px] h-[28px] ml-[6px]">
                <path d="M16 0L32 15H28V28H20V18H13V28H5V15H0Z" fill="#7a7a7a" />
              </svg>
            </div>
            <div className="ml-[8px] w-[2099px] h-[56px] bg-[#f2f2f2] rounded-t-[8px] flex items-center pl-[960px] pr-[15px]">
              <Cube className="w-[28px] h-[32px]" />
              <span className="ml-[12px] text-[24px] text-[#333333]">Arcade v1*</span>
              <svg viewBox="0 0 18 18" className="w-[17px] h-[20px] ml-auto" fill="none" stroke="#555555" strokeWidth="2">
                <path d="M1 1L17 17M17 1L1 17" />
              </svg>
            </div>
            <div className="ml-[8px] w-[54px] h-[56px] bg-[#b8b8b8] rounded-t-[6px] flex items-center justify-center">
              <svg viewBox="0 0 26 26" className="w-[26px] h-[26px]"><path d="M10 0H16V10H26V16H16V26H10V16H0V10H10Z" fill="#7a7a7a" /></svg>
            </div>
            <div className="flex-1 h-full flex items-start pt-[16px] pl-[25px]">
              <Spark className="w-[32px] h-[32px]" />
              <svg viewBox="0 0 32 32" className="w-[32px] h-[32px] ml-[34px]" fill="none">
                <circle cx="16" cy="16" r="15" stroke="#666666" strokeWidth="2" />
                <circle cx="16" cy="16" r="11.5" fill="#666666" />
                <path d="M16 8V17H23" stroke="#cccccc" strokeWidth="2.5" />
              </svg>
              <span className="ml-[8px] text-[20px] leading-[32px] text-[#444444]">1</span>
              <svg viewBox="0 0 32 34" className="w-[32px] h-[32px] ml-[47px]">
                <path d="M13 0C17 0 21 4 21 12C21 20 24 24 26 26H1C3 24 6 20 6 12C6 4 9 0 13 0Z" fill="#666666" />
                <circle cx="13" cy="30" r="3.5" fill="#666666" />
                <circle cx="23" cy="7" r="7" fill="#0696d7" />
              </svg>
              <svg viewBox="0 0 32 32" className="w-[32px] h-[32px] ml-[34px]">
                <circle cx="16" cy="16" r="16" fill="#666666" />
                <text x="16" y="24" textAnchor="middle" fontSize="24" fontWeight="700" fill="#dddddd" fontFamily="Liberation Sans">?</text>
              </svg>
              <svg viewBox="0 0 48 48" className="w-[48px] h-[48px] ml-[41px] mt-[-8px]">
                <defs>
                  <clipPath id="avatar"><circle cx="24" cy="24" r="24" /></clipPath>
                  <linearGradient id="avatarBg" x1="0" x2="0" y1="0" y2="1">
                    <stop offset="0" stopColor="#8396ad" />
                    <stop offset="1" stopColor="#a7bbcf" />
                  </linearGradient>
                </defs>
                <g clipPath="url(#avatar)">
                  <rect width="48" height="48" fill="url(#avatarBg)" />
                  <ellipse cx="24" cy="18" rx="12" ry="16" fill="#536276" />
                  <path d="M2 48C4 36 16 34 18 28H30C32 34 44 36 46 48Z" fill="#536276" />
                </g>
              </svg>
            </div>
          </div>

          {/* Ribbon */}
          <div className="h-[170px] shrink-0 bg-[#f2f2f2] flex items-start pl-[24px]">
            <div className="mt-[21px] w-[217px] h-[121px] border-2 border-[#cfcfcf] rounded-[7px] flex items-center justify-center gap-[7px] text-[22px] font-bold text-[#333333] shrink-0">
              DESIGN
              <Caret c="#333333" w={11} h={10} />
            </div>
            <div className="ml-[11px] flex flex-col flex-1 min-w-0">
              <div className="h-[44px] flex items-center text-[21.5px] text-[#333333]">
                <span className="pl-[49px] pr-[47px]">SOLID</span>
                <span className="px-[47px]">SURFACE</span>
                <span className="px-[47px]">MESH</span>
                <span className="pl-[47px] pr-[49px]">SHEET METAL</span>
                <span className="pl-[47px] pr-[50px]">PLASTIC</span>
                <span className="pl-[47px] pr-[71px]">UTILITIES</span>
                <span className="h-[47px] self-start px-[24px] bg-[#cce9f6] border-b-[6px] border-[#0696d7] text-[#0696d7] font-bold flex items-center">SKETCH</span>
              </div>
              <div className="h-[114px] flex items-start">
                <ToolGroup w="w-[536px]" label="CREATE"><Create /></ToolGroup>
                <Sep />
                <ToolGroup w="w-[364px]" label="MODIFY"><Modify /></ToolGroup>
                <Sep />
                <ToolGroup w="w-[880px]" label="CONSTRAINTS"><Constraints /></ToolGroup>
                <Sep />
                <ToolGroup w="w-[205px]" label="CONFIGURE"><Configure /></ToolGroup>
                <Sep />
                <ToolGroup w="w-[167px]" label="INSPECT"><Inspect /></ToolGroup>
                <Sep />
                <ToolGroup w="w-[192px]" label="INSERT"><Insert /></ToolGroup>
                <Sep />
                <ToolGroup w="w-[164px]" label="SELECT"><SelectIcon /></ToolGroup>
                <ToolGroup w="w-[226px]" label="FINISH SKETCH" bg="bg-[#cce9f6]">
                  <svg viewBox="0 0 70 70" className="w-[70px] h-[70px]">
                    <circle cx="35" cy="35" r="31" fill="#66cc00" />
                    <path d="M21 36L31 47L50 24" fill="none" stroke="#ffffff" strokeWidth="8" />
                  </svg>
                </ToolGroup>
              </div>
            </div>
          </div>

          {/* Viewport */}
          <div className="relative flex-1 min-h-0 bg-white overflow-hidden">
            <svg viewBox="798 279 3034 1687" className="absolute inset-0 w-full h-full">
              <Grid />
              <Ruler />
              <Model />
              <ViewCube />
            </svg>
            <BrowserPanel />
            <div className="absolute left-[8px] top-[1629px] w-[599px] h-[49px] bg-[#f2f2f2] border-b-[3px] border-r-[2px] border-l-[2px] border-[#d0d0d0] flex items-center pl-[49px] pr-[22px] text-[22px] text-[#666666]">
              <span className="flex-1">COMMENTS</span>
              <RoundBtn />
            </div>
            <SketchPalette />
            <NavBar />
          </div>

          <Timeline />
        </main>
      </div>
    </div>
  );
}
